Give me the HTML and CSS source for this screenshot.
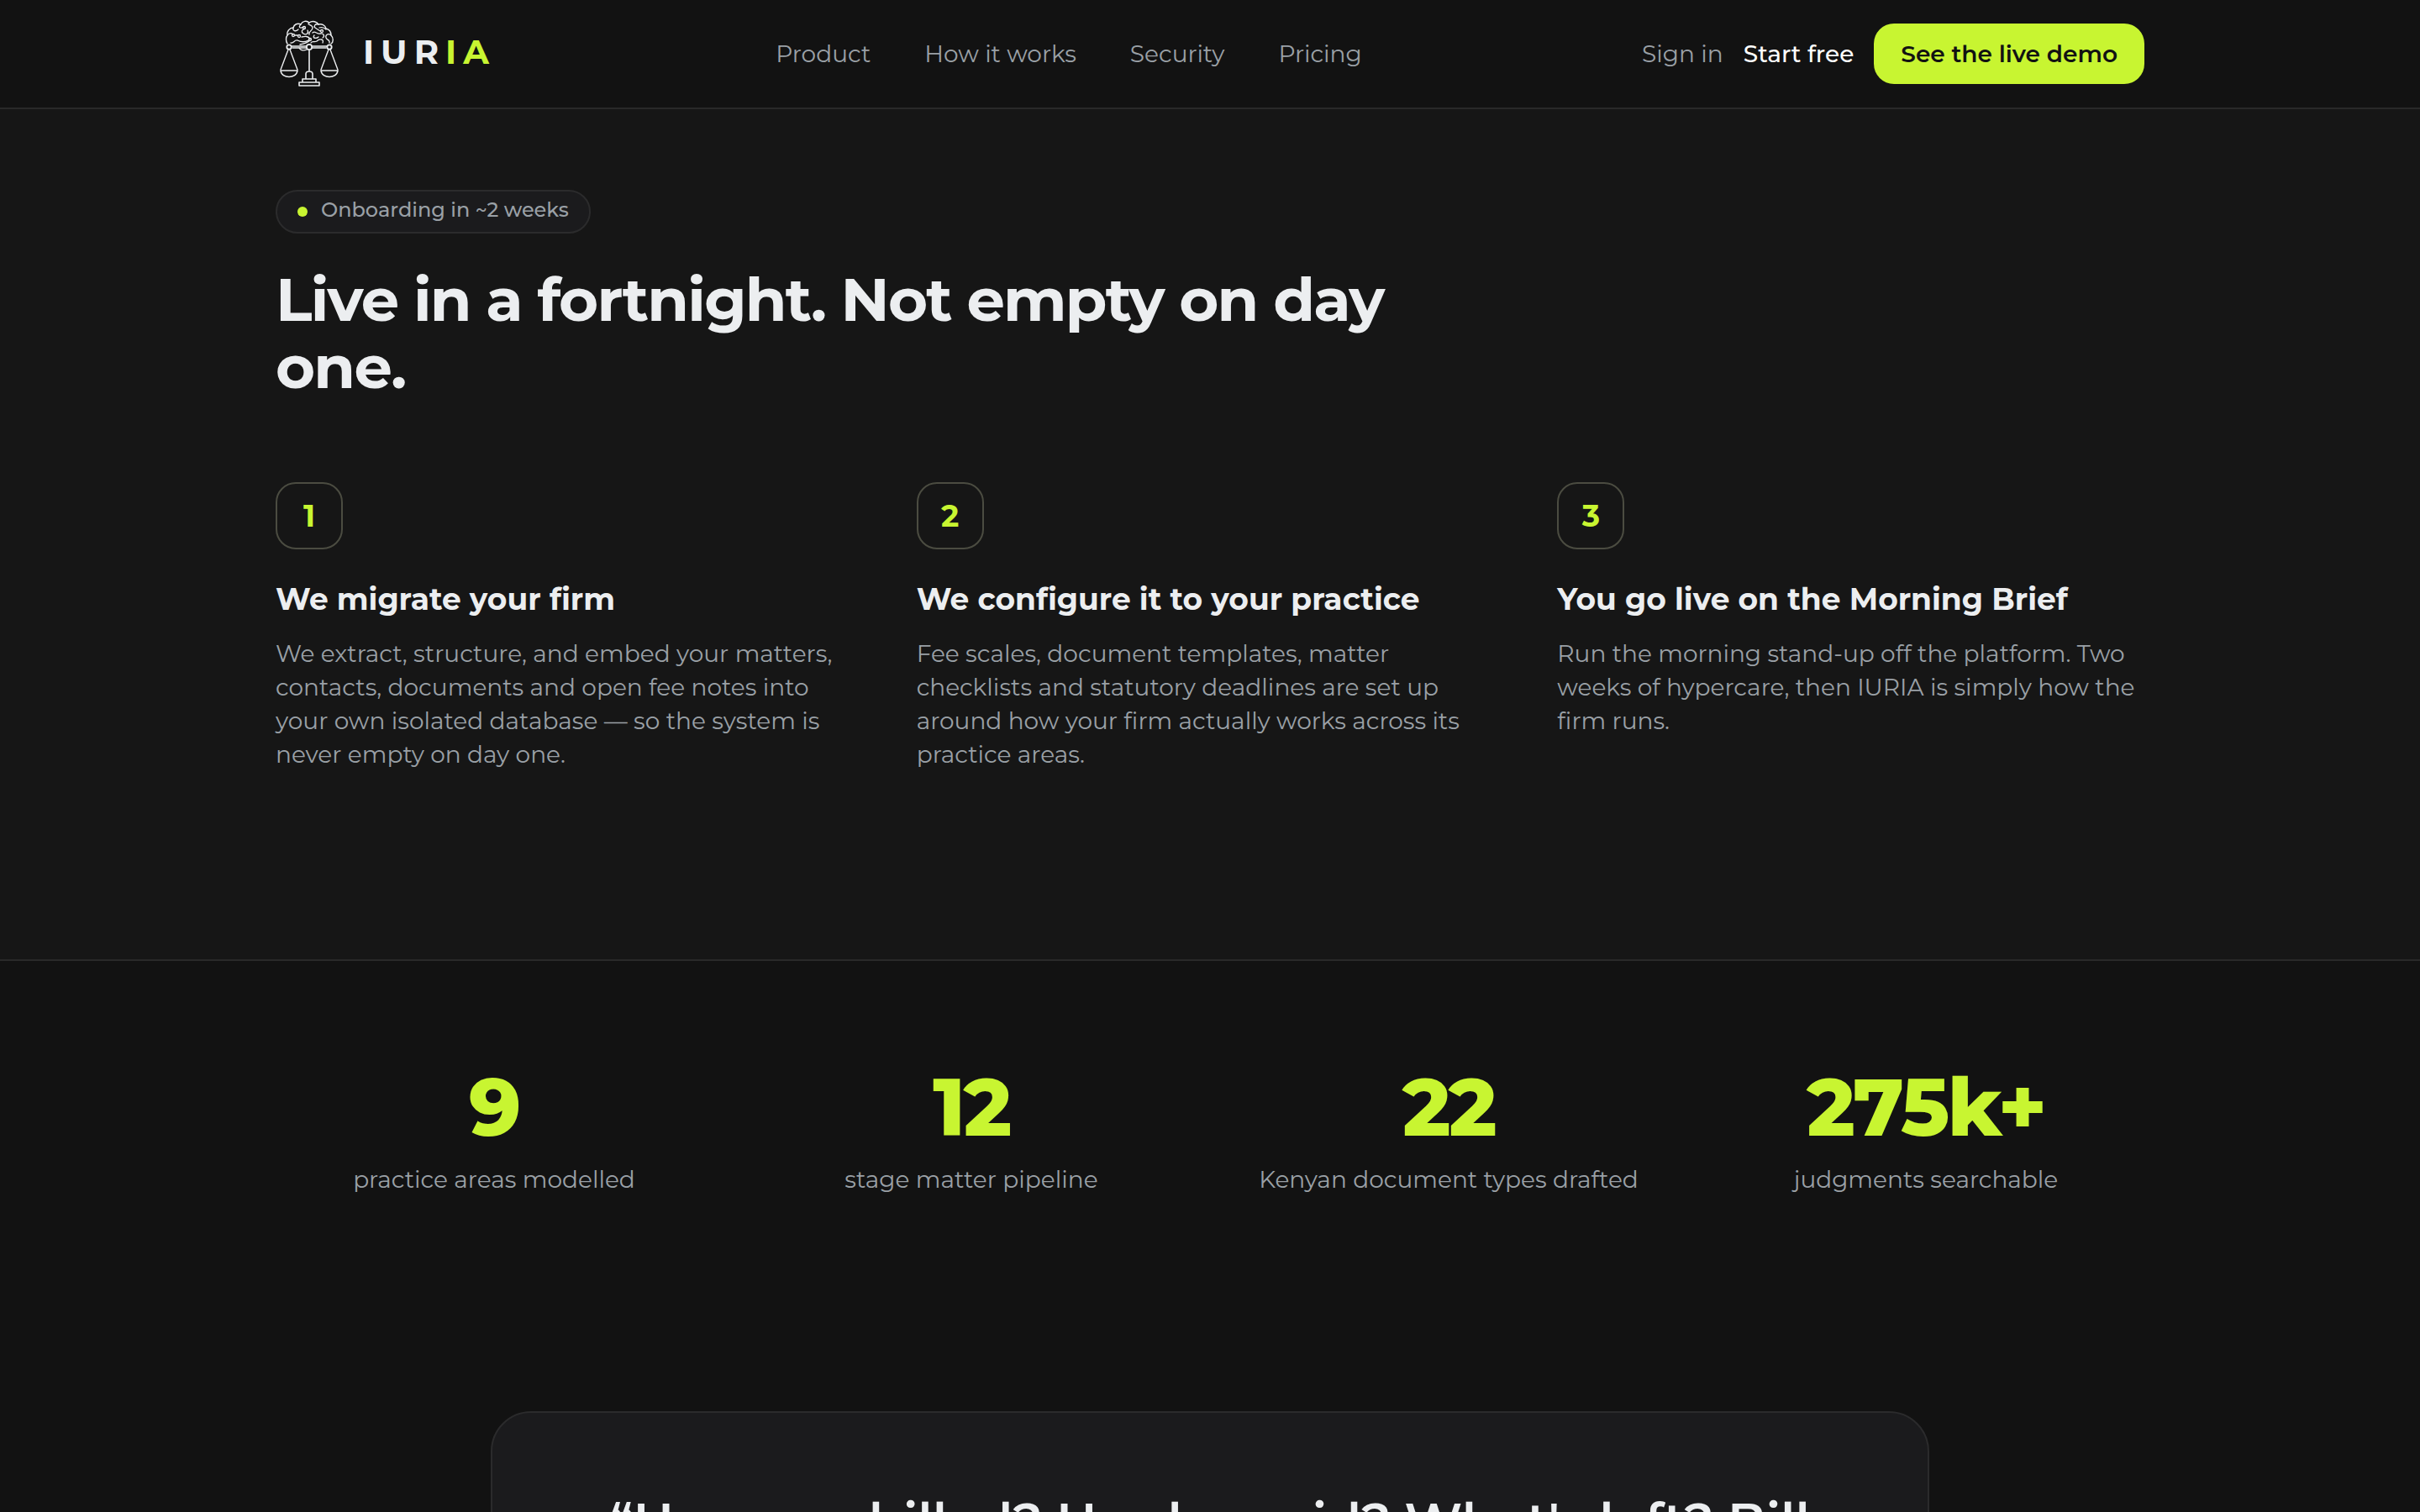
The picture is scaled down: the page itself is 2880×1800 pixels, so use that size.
FILE: index.html
```
<!DOCTYPE html>
<html lang="en">
<head>
    <meta charset="UTF-8">
    <meta name="viewport" content="width=device-width, initial-scale=1.0">
    <title>IURIA | How it works</title>
    <link rel="stylesheet" href="styles.css">
</head>
<body>
    <!-- Header -->
    <header class="header">
        <div class="container header-inner">
            <a href="#" class="brand" aria-label="IURIA">
                <svg class="brand-mark" viewBox="0 0 80 88" fill="none" stroke="currentColor" stroke-linecap="round" stroke-linejoin="round" aria-hidden="true">
                    <!-- Brain outline -->
                    <path stroke-width="1.4" d="M14 32 C12 29 12 24 14 22 C13 17 17 13 21 13 C22 9 26 7 30 9 C32 5 37 4 40 7 C44 4 49 6 51 9 C55 8 59 10 60 14 C64 15 66 18 66 22 C69 25 69 30 66 32"/>
                    <!-- Folds and circuit traces -->
                    <path stroke-width="1.3" d="M18 31 C22 32 22 27 26 28 C30 30 34 31 39 28 M14 22 C16 19 20 19 20 21 M21 13 C20 17 24 18 27 15 M23 22 H26 M30 9 C26 13 30 14 33 12 M35 14 C31 15 30 18 33 20 C36 22 40 20 38 16 M40 7 C36 10 44 9 44 13 C44 17 39 17 40 21 M51 9 C47 8 45 11 47 13 L53 17 M52 13 C55 12 58 13 60 15 M44 19 C47 16 49 21 53 20 C57 19 59 23 56 25 M66 22 C62 19 59 22 60 25 C61 28 65 27 64 31 M46 22 C43 26 49 26 51 24 M56 31 C58 26 52 26 49 29 C46 31 44 28 42 31 M31 24 C36 23 38 23 41 26 M29 33 C34 32 38 31 41 28 M28 37 C30 41 35 40 37 39"/>
                    <g stroke-width="1.3">
                        <circle cx="21" cy="22" r="1.5"/>
                        <circle cx="28" cy="23" r="1.5"/>
                        <circle cx="34" cy="13" r="1.5"/>
                        <circle cx="55" cy="17" r="1.5"/>
                        <circle cx="41" cy="27" r="1.5"/>
                    </g>
                    <!-- Beam -->
                    <path stroke-width="1.5" d="M19 35 H36 M44 35 H61 M20 37 H36 M44 37 H60"/>
                    <g stroke-width="1.8">
                        <circle cx="16" cy="36" r="2.7"/>
                        <circle cx="40" cy="36" r="3.2"/>
                        <circle cx="64" cy="36" r="2.7"/>
                    </g>
                    <!-- Pans -->
                    <path stroke-width="1.4" d="M15 39 L6 63 M17 39 L26 63 M63 39 L54 63 M65 39 L74 63"/>
                    <path stroke-width="1.6" d="M6 64 H26 C25 74 7 74 6 64 Z M54 64 H74 C73 74 55 74 54 64 Z"/>
                    <!-- Pole and base -->
                    <path stroke-width="1.6" d="M40 40 V65 M36 74 V68 C36 64 44 64 44 68 V74 M32 78 V74 H48 V78 M28 78 H52 V82 H28 Z"/>
                </svg>
                <span class="brand-name">IUR<span class="accent">IA</span></span>
            </a>
            <nav class="nav">
                <a href="#product">Product</a>
                <a href="#how">How it works</a>
                <a href="#security">Security</a>
                <a href="#pricing">Pricing</a>
            </nav>
            <div class="actions">
                <a href="#signin" class="sign-in">Sign in</a>
                <a href="#start" class="start">Start free</a>
                <button type="button" class="btn">See the live demo</button>
            </div>
        </div>
    </header>

    <!-- Onboarding steps -->
    <section class="steps-section" id="how">
        <div class="container">
            <div class="pill"><span class="dot"></span>Onboarding in ~2 weeks</div>
            <h1>Live in a fortnight. Not empty on day one.</h1>
            <div class="steps">
                <div class="step">
                    <div class="step-number">1</div>
                    <h3>We migrate your firm</h3>
                    <p>We extract, structure, and embed your matters, contacts, documents and open fee notes into your own isolated database — so the system is never empty on day one.</p>
                </div>
                <div class="step">
                    <div class="step-number">2</div>
                    <h3>We configure it to your practice</h3>
                    <p>Fee scales, document templates, matter checklists and statutory deadlines are set up around how your firm actually works across its practice areas.</p>
                </div>
                <div class="step">
                    <div class="step-number">3</div>
                    <h3>You go live on the Morning Brief</h3>
                    <p>Run the morning stand-up off the platform. Two weeks of hypercare, then IURIA is simply how the firm runs.</p>
                </div>
            </div>
        </div>
    </section>

    <!-- Stats -->
    <section class="stats-section">
        <div class="container stats">
            <div class="stat">
                <div class="stat-value">9</div>
                <p>practice areas modelled</p>
            </div>
            <div class="stat">
                <div class="stat-value">12</div>
                <p>stage matter pipeline</p>
            </div>
            <div class="stat">
                <div class="stat-value">22</div>
                <p>Kenyan document types drafted</p>
            </div>
            <div class="stat">
                <div class="stat-value">275k+</div>
                <p>judgments searchable</p>
            </div>
        </div>
    </section>

    <!-- Quote -->
    <section class="quote-section">
        <blockquote class="quote">“Have we billed? Has he paid? What's left? Bill</blockquote>
    </section>
</body>
</html>
```
FILE: styles.css
```
/* General Reset */
* {
    margin: 0;
    padding: 0;
    box-sizing: border-box;
}

body {
    height: 100vh;
    overflow: hidden;
    font-family: 'Montserrat', 'Inter', sans-serif;
    font-size: 28px;
    line-height: 40px;
    color: #eceef0;
    background: #121212;
}

a {
    color: inherit;
    text-decoration: none;
}

.container {
    max-width: 2304px;
    margin: 0 auto;
    padding: 0 40px;
}

.accent {
    color: #c8f531;
}

/* Header */
.header {
    background: #121212;
    border-bottom: 2px solid #292929;
}

.header-inner {
    display: flex;
    align-items: center;
    justify-content: space-between;
    height: 128px;
}

.brand {
    display: flex;
    align-items: center;
    gap: 24px;
}

.brand-mark {
    width: 80px;
    height: 88px;
}

.brand-name {
    padding-bottom: 4px;
    font-size: 40px;
    font-weight: 700;
    letter-spacing: 0.2em;
}

.nav {
    display: flex;
    gap: 64px;
    color: #9aa0a6;
}

.actions {
    display: flex;
    align-items: center;
    gap: 24px;
}

.sign-in {
    color: #9aa0a6;
}

.start {
    font-weight: 500;
    color: #fff;
}

.btn {
    padding: 16px 32px;
    border: none;
    border-radius: 24px;
    background: #c8f531;
    color: #121212;
    font-family: inherit;
    font-size: 28px;
    font-weight: 600;
    line-height: 40px;
    cursor: pointer;
}

/* Onboarding steps */
.steps-section {
    padding: 96px 0 224px;
    background: #161616;
}

.pill {
    display: inline-block;
    padding: 6px 24px 10px;
    border: 2px solid #2b2b2c;
    border-radius: 26px;
    background: #1b1b1d;
    color: #9aa0a6;
    font-size: 24px;
    font-weight: 500;
    line-height: 32px;
    vertical-align: top;
}

.dot {
    display: inline-block;
    width: 12px;
    height: 12px;
    margin-right: 16px;
    border-radius: 50%;
    background: #c8f531;
}

h1 {
    max-width: 1400px;
    margin: 38px 0 98px;
    font-size: 72px;
    font-weight: 700;
    line-height: 80px;
    letter-spacing: -0.025em;
}

.steps {
    display: grid;
    grid-template-columns: repeat(3, 1fr);
    gap: 64px;
}

.step-number {
    display: flex;
    align-items: center;
    justify-content: center;
    width: 80px;
    height: 80px;
    border: 2px solid #4b4c41;
    border-radius: 24px;
    color: #c8f531;
    font-size: 36px;
    font-weight: 700;
}

.step h3 {
    margin: 37px 0 23px;
    font-size: 36px;
    font-weight: 700;
    line-height: 44px;
}

.step p,
.stat p {
    color: #9aa0a6;
}

/* Stats */
.stats-section {
    padding: 126px 0 128px;
    border-top: 2px solid #292929;
}

.stats {
    display: grid;
    grid-template-columns: repeat(4, 1fr);
    gap: 48px;
    text-align: center;
}

.stat-value {
    margin-bottom: 18px;
    color: #c8f531;
    font-size: 96px;
    font-weight: 800;
    line-height: 96px;
    letter-spacing: -0.025em;
}

/* Quote */
.quote-section {
    padding: 128px 40px;
}

.quote {
    max-width: 1712px;
    min-height: 400px;
    margin: 0 auto;
    padding: 96px;
    border: 2px solid #2b2b2c;
    border-radius: 48px;
    background: #1b1b1d;
    font-size: 60px;
    font-weight: 600;
    line-height: 68px;
    text-align: center;
}
```
